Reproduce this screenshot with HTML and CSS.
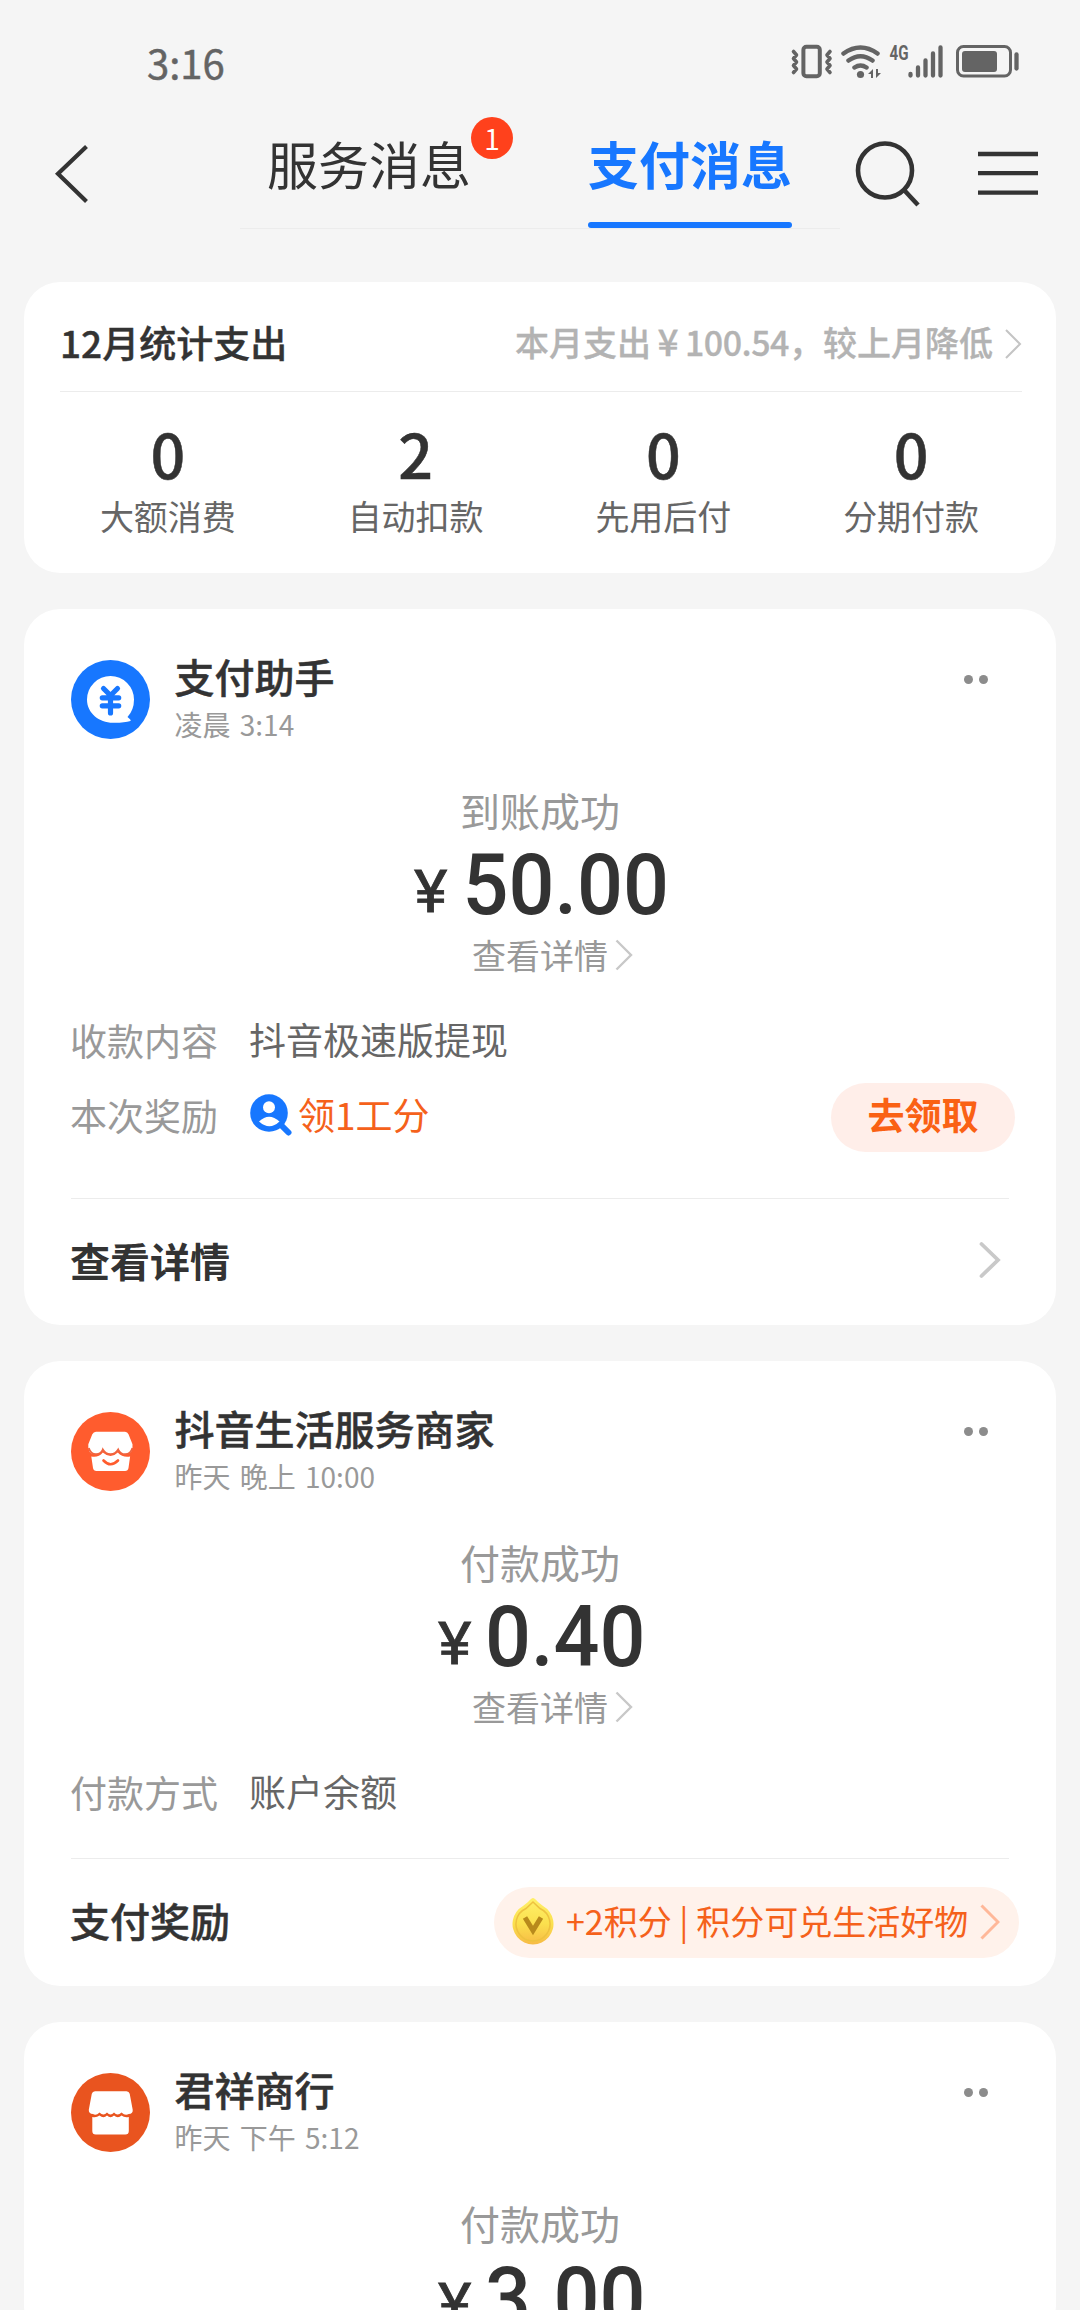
FILE: index.html
```html
<!DOCTYPE html>
<html lang="zh-CN">
<head>
<meta charset="utf-8">
<title>支付消息</title>
<link rel="stylesheet" href="styles.css">
</head>
<body>
<div class="statusbar">
  <span class="clock">3:16</span>
  <svg class="sys" width="230" height="36" viewBox="0 0 230 36" fill="none" stroke="#646464" stroke-linecap="round" stroke-linejoin="round">
    <rect x="13.400" y="3.800" width="16.400" height="29.400" rx="3" stroke-width="4"/>
    <path d="M3.500 8.500l3 3.500-3 3.500 3 3.500-3 3.500 3 3.500-3 3.500M40 8.500l-3 3.500 3 3.500-3 3.500 3 3.500-3 3.500 3 3.500" stroke-width="3.600"/>
    <path d="M53.500 10.500Q70.500-1.500 87.500 10.500M58.500 17.500q12-8.500 24 0M64.500 24.500q6-4 12 0" stroke-width="4.500"/>
    <circle cx="70.500" cy="31.500" r="3.600" fill="#646464" stroke="none"/>
    <path d="M78 31l5-5v9h-2v-4zM91 30l-5 5v-9h2v4z" fill="#646464" stroke="none"/>
    <path d="M120.500 31v1.500M128 24.500v8M135.500 17.500v15M143 10.500v22M150.500 4.500v28" stroke-width="4.300"/>
    <rect x="167.500" y="3.500" width="53" height="29.500" rx="6" stroke-width="3"/>
    <rect x="172" y="8" width="35" height="21" rx="3" fill="#646464" stroke="none"/>
    <path d="M226.500 11.500v14" stroke-width="4.300"/>
    <text class="net" x="99.500" y="17" textLength="19" lengthAdjust="spacingAndGlyphs">4G</text>
  </svg>
</div>
<header class="nav">
  <svg class="back" width="40" height="64" viewBox="0 0 40 64" fill="none" stroke="#333" stroke-width="4.200"><path d="M35.500 4.500L7 31.800 35.500 59.500"/></svg>
  <nav class="tabs">
    <a class="tab">服务消息<span class="badge">1</span></a>
    <a class="tab active">支付消息</a>
  </nav>
  <svg class="search" width="66" height="68" viewBox="0 0 66 68" fill="none" stroke="#333" stroke-width="4.600"><circle cx="30" cy="30.500" r="27"/><path d="M49.500 50.500L63 65"/></svg>
  <svg class="menu" width="60" height="44" viewBox="0 0 60 44" stroke="#333" stroke-width="4.300"><path d="M0 3h60M0 22.200h60M0 41.700h60"/></svg>
</header>
<main class="feed">
  <section class="card summary">
    <div class="summary-head">
      <h2>12月统计支出</h2>
      <span class="trend">本月支出<span class="yen">¥</span><span class="sum">100.54</span>，较上月降低</span>
      <svg class="chev" width="17" height="32" viewBox="0 0 17 32" fill="none" stroke="#c4c4c4" stroke-width="2"><path d="M1 2l14 14L1 30"/></svg>
    </div>
    <div class="stats">
      <div><b>0</b><span>大额消费</span></div>
      <div><b>2</b><span>自动扣款</span></div>
      <div><b>0</b><span>先用后付</span></div>
      <div><b>0</b><span>分期付款</span></div>
    </div>
  </section>

  <section class="card msg">
    <div class="msg-head">
      <svg class="avatar" width="79" height="79" viewBox="0 0 79 79">
        <circle cx="39.500" cy="39.500" r="39.500" fill="#1777ff"/>
        <path d="M56.500 57Q63 50 63 39.500A23.500 23.500 0 0 0 16 39.500C16 53 28 62.800 42 62.800Q53 63 59.500 61Q60.500 60 56.500 57z" fill="#fff"/>
        <path d="M32.500 28.500l7 7 7-7M39.500 35.500v17.500M31.300 37.800h16.400M31.300 45.800h16.400" fill="none" stroke="#1777ff" stroke-width="5.200" stroke-linecap="round" stroke-linejoin="round"/>
      </svg>
      <div class="who"><h3>支付助手</h3><p>凌晨 3:14</p></div>
      <i class="dots"></i>
    </div>
    <div class="result">
      <p class="state">到账成功</p>
      <p class="amount"><small>¥</small><b>50.00</b></p>
      <p class="more">查看详情<svg width="18" height="32" viewBox="0 0 18 32" fill="none" stroke="#c8c8c8" stroke-width="2.400"><path d="M1.500 1.500L16 16 1.500 30.500"/></svg></p>
    </div>
    <dl class="rows">
      <div class="row"><dt>收款内容</dt><dd>抖音极速版提现</dd></div>
      <div class="row"><dt>本次奖励</dt><dd class="hot">
        <svg width="42" height="42" viewBox="0 0 42 42"><circle cx="19" cy="19" r="18.800" fill="#1777ff"/><path d="M32 32l6.500 6.500" stroke="#1777ff" stroke-width="6" stroke-linecap="round"/><circle cx="19" cy="13.300" r="6" fill="#fff"/><path d="M9 27.500q10-9.500 20.500 0-10 9.500-20.500 0z" fill="#fff"/></svg>领1工分</dd>
        <a class="claim">去领取</a></div>
    </dl>
    <div class="foot">
      <h4>查看详情</h4>
      <svg class="go" width="22" height="38" viewBox="0 0 22 38" fill="none" stroke="#c9c9c9" stroke-width="3.800" stroke-linecap="round"><path d="M2.500 3L19 19 2.500 35"/></svg>
    </div>
  </section>

  <section class="card msg">
    <div class="msg-head">
      <svg class="avatar" width="79" height="79" viewBox="0 0 79 79">
        <circle cx="39.500" cy="39.500" r="39.500" fill="#ff5c2e"/>
        <path d="M25 19.700h29q2.500 0 3.500 2.500l4 10q1 9.500-7 10-5 0-7.300-5.500-2.700 5.500-7.700 5.500t-7.700-5.500q-2.500 5.500-7.500 5.500-8-.5-7-10l4-10q1.200-2.500 3.700-2.500z" fill="#fff"/>
        <path d="M20.300 44.500q7 1.500 11.500-4 8 7 15 0 5 5.500 12.300 4L57.500 56q-.5 3-3.500 3H25.500q-3 0-3.500-3z" fill="#fff"/>
        <path d="M17.800 36q2 6.300 7.300 6.200 5 0 6.700-4.700 2.700 4.700 7.700 4.700t7.700-4.700q2 4.700 7 4.700 5.400 0 7.200-6.200" fill="none" stroke="#f0643f" stroke-width="1.800"/>
        <path d="M32.500 48.500q7 7.500 14.500 0" fill="none" stroke="#ff5c2e" stroke-width="2.600" stroke-linecap="round"/>
      </svg>
      <div class="who"><h3>抖音生活服务商家</h3><p>昨天 晚上 10:00</p></div>
      <i class="dots"></i>
    </div>
    <div class="result">
      <p class="state">付款成功</p>
      <p class="amount"><small>¥</small><b>0.40</b></p>
      <p class="more">查看详情<svg width="18" height="32" viewBox="0 0 18 32" fill="none" stroke="#c8c8c8" stroke-width="2.400"><path d="M1.500 1.500L16 16 1.500 30.500"/></svg></p>
    </div>
    <dl class="rows">
      <div class="row"><dt>付款方式</dt><dd>账户余额</dd></div>
    </dl>
    <div class="foot reward">
      <h4>支付奖励</h4>
      <a class="points">
        <svg width="42" height="50" viewBox="0 0 42 50">
          <defs><linearGradient id="gold" x1="0" y1="0" x2="0" y2="1"><stop offset="0" stop-color="#fff06a"/><stop offset=".55" stop-color="#fbe04e"/><stop offset="1" stop-color="#f7bb45"/></linearGradient></defs>
          <path d="M21 1Q22.500 1 26 5L31 9A20.500 20.500 0 1 1 11 9L16 5Q19.500 1 21 1z" fill="url(#gold)"/>
          <path d="M21 5l7 6.500a17 17 0 1 1-14 0z" fill="none" stroke="#eec23f" stroke-width="1.500"/>
          <path d="M13 20.500l8 13 8-13" fill="none" stroke="#b88a1c" stroke-width="5"/>
        </svg>
        <span>+2积分 | 积分可兑生活好物</span>
        <svg width="20" height="36" viewBox="0 0 20 36" fill="none" stroke="#ffb899" stroke-width="3"><path d="M1.500 1.500L18 18 1.500 34.500"/></svg>
      </a>
    </div>
  </section>

  <section class="card msg">
    <div class="msg-head">
      <svg class="avatar" width="79" height="79" viewBox="0 0 79 79">
        <circle cx="39.500" cy="39.500" r="39.500" fill="#e9541f"/>
        <path d="M24 18.200h31.500q2.500 0 3.200 2.500l3 16q.5 4-4 4.300-3.500 2-7.200-1.500-4 3.800-7.500 0-3.500 3.800-7 0-3.500 3.800-7.500 0-3.500 3.500-6.500 1.500-4.500-.3-4.200-4.300l3-16q.7-2.500 3.200-2.500z" fill="#fff"/>
        <path d="M21.300 44q4 1 7.200-1.500 4 3.500 7.500 0 3.500 3.500 7 0 4 3.500 7.500 0 3 2.500 7.300 1.500v14q0 3.500-3.500 3.500H24.800q-3.500 0-3.500-3.500z" fill="#fff"/>
      </svg>
      <div class="who"><h3>君祥商行</h3><p>昨天 下午 5:12</p></div>
      <i class="dots"></i>
    </div>
    <div class="result">
      <p class="state">付款成功</p>
      <p class="amount"><small>¥</small><b>3.00</b></p>
    </div>
  </section>
</main>
</body>
</html>
```
FILE: styles.css
```css
* { box-sizing: border-box; margin: 0; padding: 0; }
html, body { height: 2310px; overflow: hidden; }
body { width: 1080px; background: #f5f5f5; color: #333; font-family: "Noto Sans CJK SC", "Noto Sans", sans-serif; }
svg { display: block; flex: none; }

.statusbar { display: flex; justify-content: space-between; height: 124px; padding: 43px 60px 0 147px; }
.clock { height: 38px; color: #646464; font-size: 40px; line-height: 38px; -webkit-text-stroke: .5px #646464; }
.net { font: 700 21px "Roboto", sans-serif; fill: #646464; stroke: none; }

.nav { display: flex; align-items: flex-start; height: 158px; padding-left: 51px; }
.back { margin-top: 18px; }
.tabs { display: flex; width: 600px; height: 105px; margin-left: 149px; border-bottom: 1px solid #ececec; }
.tab { position: relative; display: flex; flex: 1; justify-content: center; height: 104px; font-size: 51px; line-height: 78px; white-space: nowrap; }
.active { color: #1777ff; font-weight: 700; }
.active::after { content: ""; position: absolute; left: 48px; bottom: 0; width: 204px; height: 6px; border-radius: 3px; background: #1777ff; }
.badge { width: 42px; height: 42px; margin-top: -7px; border-radius: 50%; background: #ff411c; color: #fff; font-size: 28px; line-height: 42px; text-align: center; }
.search { margin: 16px 0 0 15px; }
.menu { margin: 27px 0 0 57px; }

.feed { display: flex; flex-direction: column; gap: 36px; padding: 0 24px; }
.card { flex: none; background: #fff; border-radius: 36px; }

.summary { height: 291px; }
.summary-head { display: flex; align-items: center; height: 110px; margin: 0 34px 0 36px; padding-top: 14px; border-bottom: 1px solid #ececec; }
.summary-head h2 { flex: 1; padding-bottom: 3px; font-size: 37px; font-weight: 500; line-height: 50px; white-space: nowrap; -webkit-text-stroke: .4px #333; }
.trend { padding-bottom: 3px; color: #b3b3b3; font-size: 34px; font-weight: 500; line-height: 50px; white-space: nowrap; -webkit-text-stroke: .3px #b3b3b3; }
.yen { display: inline-block; width: 34px; font-size: 37px; line-height: 40px; text-align: center; }
.sum { letter-spacing: -.5px; }
.chev { margin-left: 12px; }
.stats { display: grid; grid-template-columns: repeat(4, 1fr); margin: 0 21px 0 20px; padding-top: 23px; text-align: center; }
.stats b { display: block; font-size: 61px; font-weight: 500; line-height: 76px; -webkit-text-stroke: .5px #333; }
.stats span { display: block; padding-top: 2px; color: #666; font-size: 34px; line-height: 46px; }

.msg { padding: 43px 47px 0; }
.msg-head { display: flex; height: 96px; }
.avatar { margin-top: 8px; }
.who { flex: 1; margin-left: 24.5px; }
.who h3 { font-size: 40px; font-weight: 500; line-height: 49px; -webkit-text-stroke: .5px #333; }
.who p { color: #999; font-size: 28px; line-height: 47px; word-spacing: 3px; }
.dots { display: flex; gap: 6px; margin: 23px 21px 0 0; }
.dots::before, .dots::after { content: ""; width: 9px; height: 9px; border-radius: 50%; background: #8c8c8c; }

.result { margin-top: 34px; }
.state { color: #999; font-size: 40px; line-height: 56px; text-align: center; }
.amount { display: flex; justify-content: center; align-items: baseline; gap: 9px; height: 90px; padding-left: 10px; font: 500 86px/94px "Roboto", sans-serif; }
.amount b { font-weight: 500; transform: scaleX(.94); }
.amount small { font-size: 60px; font-weight: 400; line-height: 60px; -webkit-text-stroke: .8px #333; transform: translateY(-2px) scaleX(1.06); }
.more { display: flex; justify-content: center; align-items: center; gap: 7px; height: 52px; padding: 2px 0 0 25px; color: #999; font-size: 34px; line-height: 50px; }

.rows { margin-top: 22px; }
.row { display: flex; height: 75px; font-size: 37px; line-height: 77px; }
.row dt { width: 179px; margin-left: -1px; color: #999; }
.row dd { display: flex; align-items: center; flex: 1; color: #666; }
.row .hot { gap: 6px; padding-left: 1px; color: #f5611b; }
.claim { width: 184px; height: 69px; margin: 6px -6px 0 0; border-radius: 35px; background: #ffeee9; color: #fa6114; font-weight: 700; line-height: 63px; text-align: center; }

.foot { display: flex; justify-content: space-between; align-items: center; height: 127px; margin-top: 46px; padding-bottom: 5px; border-top: 1px solid #ececec; }
.foot h4 { margin-left: -1px; font-size: 40px; font-weight: 700; line-height: 56px; }
.go { margin-right: 8px; }
.reward { height: 128px; margin-top: 29px; }
.reward h4 { font-weight: 500; -webkit-text-stroke: .5px #333; }
.points { display: flex; align-items: center; width: 525px; height: 71px; margin: 4px -10px 0 0; padding-left: 18px; border-radius: 36px; background: #fff2eb; color: #f5611b; font-size: 34px; line-height: 64px; white-space: nowrap; }
.points span { width: 414px; padding: 0 0 2px 12px; }
.points svg:last-child { margin-left: 12px; }
```
